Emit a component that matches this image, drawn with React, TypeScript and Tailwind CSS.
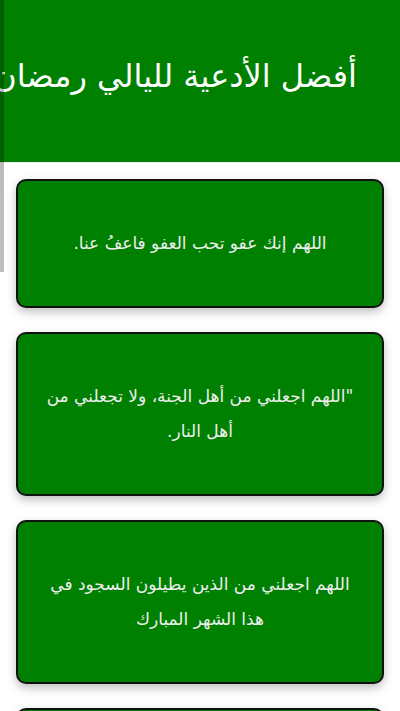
const DUAS = [
  'اللهم إنك عفو تحب العفو فاعفُ عنا.',
  '"اللهم اجعلني من أهل الجنة، ولا تجعلني من أهل النار.',
  'اللهم اجعلني من الذين يطيلون السجود في هذا الشهر المبارك',
  'اللهم ارزقني فيه طاعة الخاشعين',
];

export default function App() {
  return (
    <div
      dir="rtl"
      className="relative min-h-screen overflow-hidden bg-white"
      style={{ fontFamily: '"DejaVu Sans", "Noto Sans", sans-serif' }}
    >
      {/* overlay scrollbar */}
      <div className="pointer-events-none absolute left-0 top-0 z-10 h-[163px] w-[4px] bg-black/25" />
      <div className="pointer-events-none absolute left-0 top-[163px] z-10 h-[109px] w-[4px] bg-[#bdbdbd]" />

      <header className="flex h-[163px] items-center overflow-hidden border-b border-[#eeeeee] bg-[#008000] pb-[10px] pr-[43px]">
        <h1 className="whitespace-nowrap text-[32px] text-white">أفضل الأدعية لليالي رمضان</h1>
      </header>

      <div className="flex flex-col gap-[24px] px-4 pt-[16px]">
        {DUAS.map((d) => (
          <div
            key={d}
            className="rounded-[10px] border-2 border-[#111111] bg-[#008000] px-7 py-[45px] text-center text-[17px] leading-[35px] text-[#eeeeee] shadow-[0_4px_10px_rgba(0,0,0,0.25)]"
          >
            {d}
          </div>
        ))}
      </div>
    </div>
  );
}
